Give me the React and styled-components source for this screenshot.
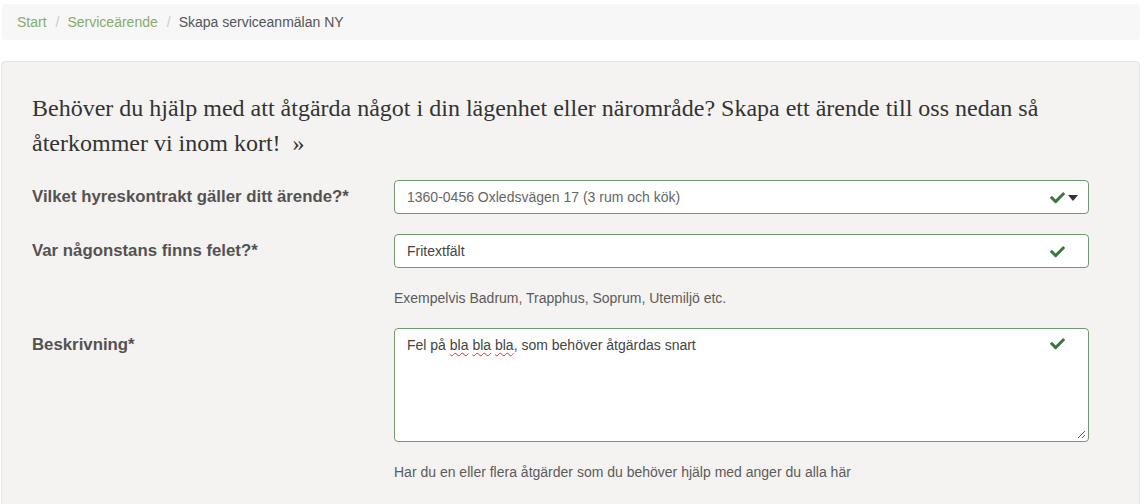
import React from 'react';
import styled, { createGlobalStyle } from 'styled-components';

const GlobalStyle = createGlobalStyle`
  body {
    margin: 0;
    background: #ffffff;
    font-family: "Liberation Sans", Arial, sans-serif;
    font-size: 14px;
    color: #333333;
  }
`;

const Page = styled.div`
  width: 1140px;
  padding: 4px 0 0 1px;
  box-sizing: border-box;
`;

const Breadcrumb = styled.ol`
  display: flex;
  align-items: center;
  list-style: none;
  margin: 0 0 21px 1px;
  padding: 8px 15px;
  height: 36px;
  box-sizing: border-box;
  background: #f7f7f7;
  border-radius: 4px;
  font-size: 14px;
  line-height: 20px;

  & li + li::before {
    content: '/';
    padding: 0 8px 0 9px;
    color: #cccccc;
  }
`;

const Crumb = styled.li`
  color: ${(p) => (p.active ? '#555555' : '#86ab6c')};
`;

const Panel = styled.div`
  background: #f4f3f2;
  border: 1px solid #e6e5e4;
  border-radius: 4px;
  padding: 29px 50px 40px 30px;
  min-height: 460px;
  box-sizing: border-box;
`;

const Lead = styled.p`
  margin: 0 0 19px 0;
  font-family: "Liberation Serif", "Times New Roman", serif;
  font-size: 24px;
  line-height: 35px;
  color: #333333;
`;

const Form = styled.div`
  display: grid;
  grid-template-columns: 362px 695px;
  row-gap: 20px;
`;

const Label = styled.label`
  align-self: start;
  padding-top: 7px;
  font-weight: bold;
  font-size: 16.8px;
  line-height: 20px;
  color: #545251;
`;

const Field = styled.div`
  display: flex;
  flex-direction: column;
`;

const Control = styled.div`
  position: relative;
  display: flex;
  align-items: ${(p) => (p.multi ? 'flex-start' : 'center')};
  height: ${(p) => (p.multi ? '114px' : '34px')};
  padding: ${(p) => (p.multi ? '6px 12px' : '0 12px')};
  box-sizing: border-box;
  background: #ffffff;
  border: 1px solid #6f9a6f;
  border-radius: 4px;
  font-size: 14px;
  line-height: 20px;
  color: ${(p) => (p.muted ? '#666666' : '#444444')};
`;

const Icons = styled.div`
  position: absolute;
  right: ${(p) => (p.caret ? '10px' : '23px')};
  top: ${(p) => (p.multi ? '9px' : '11px')};
  display: flex;
  align-items: center;
  gap: 3px;
`;

const Misspelled = styled.span`
  text-decoration: underline wavy #e03030;
  text-decoration-thickness: 1px;
  text-underline-offset: 2px;
`;

const Help = styled.div`
  margin-top: ${(p) => p.gap || '20px'};
  font-size: 14px;
  line-height: 20px;
  color: #5c5b5a;
`;

const Grip = styled.svg`
  position: absolute;
  right: 2px;
  bottom: 2px;
`;

const Check = () => (
  <svg width="15" height="12" viewBox="0 0 512 400">
    <path
      fill="#3c763d"
      d="M174 375L8 209c-10-10-10-26 0-36l36-36c10-10 26-10 36 0l112 112L432 9c10-10 26-10 36 0l36 36c10 10 10 26 0 36L210 375c-10 10-26 10-36 0z"
    />
  </svg>
);

const Caret = () => (
  <svg width="10" height="6" viewBox="0 0 10 6">
    <path d="M0 0h10L5 6z" fill="#333333" />
  </svg>
);

const App = () => (
  <Page>
    <GlobalStyle />
    <Breadcrumb>
      <Crumb>Start</Crumb>
      <Crumb>Serviceärende</Crumb>
      <Crumb active>Skapa serviceanmälan NY</Crumb>
    </Breadcrumb>
    <Panel>
      <Lead>
        Behöver du hjälp med att åtgärda något i din lägenhet eller närområde? Skapa ett ärende till oss nedan så
        återkommer vi inom kort!&nbsp; »
      </Lead>
      <Form>
        <Label>Vilket hyreskontrakt gäller ditt ärende?*</Label>
        <Field>
          <Control muted>
            1360-0456 Oxledsvägen 17 (3 rum och kök)
            <Icons caret>
              <Check />
              <Caret />
            </Icons>
          </Control>
        </Field>

        <Label>Var någonstans finns felet?*</Label>
        <Field>
          <Control>
            Fritextfält
            <Icons>
              <Check />
            </Icons>
          </Control>
          <Help>Exempelvis Badrum, Trapphus, Soprum, Utemiljö etc.</Help>
        </Field>

        <Label>Beskrivning*</Label>
        <Field>
          <Control multi>
            <span>
              Fel på <Misspelled>bla</Misspelled> <Misspelled>bla</Misspelled> <Misspelled>bla</Misspelled>, som behöver åtgärdas snart
            </span>
            <Icons multi>
              <Check />
            </Icons>
            <Grip width="9" height="9" viewBox="0 0 9 9">
              <path d="M1 8L8 1M5 8L8 5" stroke="#555555" strokeWidth="1" />
            </Grip>
          </Control>
          <Help>Har du en eller flera åtgärder som du behöver hjälp med anger du alla här</Help>
        </Field>
      </Form>
    </Panel>
  </Page>
);

export default App;
